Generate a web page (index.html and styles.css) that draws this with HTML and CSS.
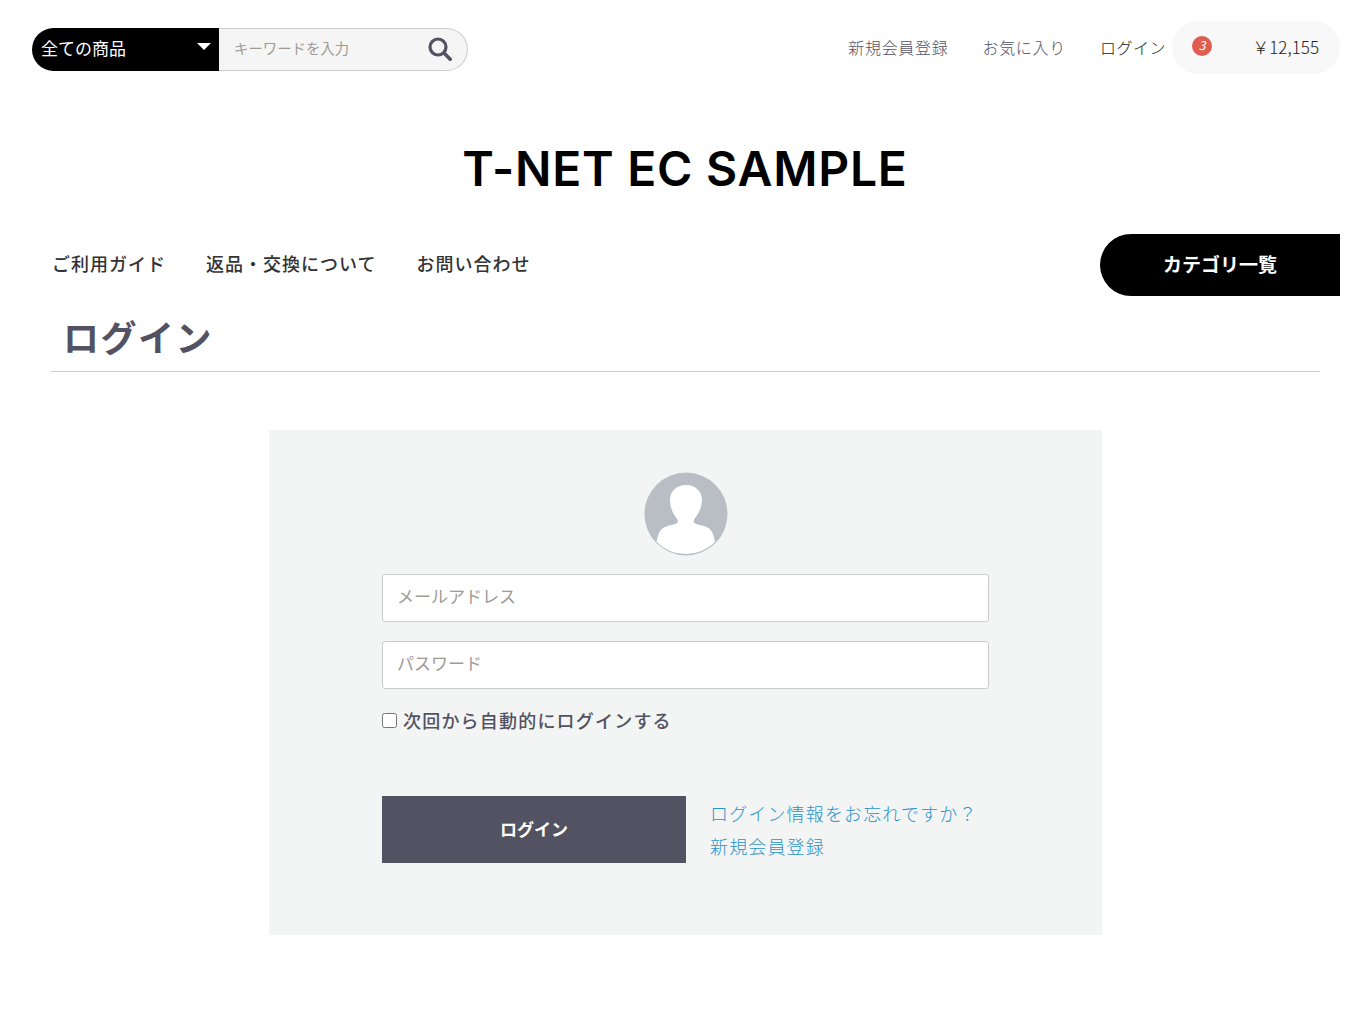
FILE: index.html
```html
<!DOCTYPE html>
<html lang="ja">
<head>
    <meta charset="UTF-8">
    <meta name="viewport" content="width=device-width, initial-scale=1.0">
    <title>ログイン - T-NET EC SAMPLE</title>
    <link rel="stylesheet" href="styles.css">
</head>
<body>
    <header class="header">
        <div class="header-top">
            <form class="search">
                <div class="search-category">
                    <span>全ての商品</span>
                    <span class="search-arrow"></span>
                </div>
                <div class="search-box">
                    <input type="text" class="search-input" placeholder="キーワードを入力">
                    <svg class="search-icon" viewBox="0 0 24 24" width="24" height="24">
                        <circle cx="10" cy="10" r="8" fill="none" stroke="#525263" stroke-width="3.2"/>
                        <path d="M16 16l6.2 6.2" fill="none" stroke="#525263" stroke-width="3.6" stroke-linecap="round"/>
                    </svg>
                </div>
            </form>
            <nav class="member-nav">
                <a href="#" class="member-link">新規会員登録</a>
                <a href="#" class="member-link">お気に入り</a>
                <a href="#" class="member-link member-link-login">ログイン</a>
            </nav>
            <div class="cart">
                <span class="cart-badge">3</span>
                <span class="cart-price">￥12,155</span>
            </div>
        </div>
        <h1 class="logo">T-NET EC SAMPLE</h1>
        <div class="header-nav">
            <ul class="guide-nav">
                <li><a href="#">ご利用ガイド</a></li>
                <li><a href="#">返品・交換について</a></li>
                <li><a href="#">お問い合わせ</a></li>
            </ul>
            <a href="#" class="category-btn">カテゴリ一覧</a>
        </div>
    </header>

    <main class="main">
        <div class="page-heading">
            <h2>ログイン</h2>
        </div>
        <div class="login-box">
            <svg class="avatar" viewBox="0 0 84 84" width="84" height="84">
                <circle cx="42" cy="42" r="41.5" fill="#b8bec4"/>
                <path d="M42 13c-9 0-16 6-16 15 0 7 2.500 13 6.500 18 1.500 2 2 4 0 5.500-3 1.500-8 1.500-12.500 4-4 2-6 6-7.500 14.500A41.500 41.500 0 0 0 71 70c-1.500-8.500-3.500-12.500-7.500-14.500-4.500-2.500-9.500-2.500-12.500-4-2-1.500-1.500-3.500 0-5.500 4-5 7-11 7-18 0-9-7-15-16-15z" fill="#fff"/>
            </svg>
            <form class="login-form">
                <input type="email" class="form-input" placeholder="メールアドレス">
                <input type="password" class="form-input" placeholder="パスワード">
                <label class="remember">
                    <input type="checkbox">
                    <span>次回から自動的にログインする</span>
                </label>
                <div class="login-actions">
                    <button type="button" class="login-btn">ログイン</button>
                    <div class="login-links">
                        <a href="#">ログイン情報をお忘れですか？</a>
                        <a href="#">新規会員登録</a>
                    </div>
                </div>
            </form>
        </div>
    </main>
</body>
</html>
```

FILE: styles.css
```css
* {
    margin: 0;
    padding: 0;
    box-sizing: border-box;
}

body {
    background: #fff;
    color: #525263;
    font-family: "Noto Sans CJK JP", "Noto Sans", sans-serif;
    min-height: 1027px;
}

a {
    color: inherit;
    text-decoration: none;
}

ul {
    list-style: none;
}

.header {
    padding: 21px 29px 0 32px;
}

.header-top {
    display: flex;
    align-items: flex-start;
    height: 53px;
}

.search {
    display: flex;
    width: 436px;
    height: 43px;
    margin-top: 7px;
}

.search-category {
    width: 187px;
    display: flex;
    align-items: center;
    justify-content: space-between;
    padding: 0 8px 4px 9px;
    background: #000;
    color: #fff;
    font-size: 17px;
    border-radius: 22px 0 0 22px;
}

.search-arrow {
    width: 0;
    height: 0;
    margin: 0 0 2px;
    border-left: 7px solid transparent;
    border-right: 7px solid transparent;
    border-top: 7px solid #fff;
}

.search-box {
    flex: 1;
    display: flex;
    align-items: center;
    padding: 0 15px;
    background: #f5f5f5;
    border: 1px solid #ccc;
    border-left: none;
    border-radius: 0 22px 22px 0;
}

.search-input {
    flex: 1;
    min-width: 0;
    margin-top: -4px;
    background: none;
    border: none;
    outline: none;
    font-family: inherit;
    font-size: 14.400px;
}

.search-input::placeholder {
    color: #a09b95;
    opacity: 1;
}

.search-icon {
    flex: none;
    margin-top: -1px;
}

.member-nav {
    display: flex;
    align-items: center;
    margin-left: auto;
    height: 51px;
}

.member-link {
    font-size: 16px;
    font-weight: 300;
    color: #525263;
    letter-spacing: 0.7px;
    margin-left: 34px;
}

.member-link-login {
    color: #222;
    letter-spacing: 0.5px;
}

.cart {
    position: relative;
    display: flex;
    align-items: center;
    justify-content: flex-end;
    width: 168px;
    height: 53px;
    margin-left: 6px;
    padding: 0 21px 2px 0;
    background: #f8f8f8;
    border-radius: 27px;
}

.cart-badge {
    position: absolute;
    left: 20px;
    top: 15px;
    width: 20px;
    height: 20px;
    border-radius: 50%;
    background: #de5d50;
    color: #fff;
    font-size: 12px;
    font-style: italic;
    line-height: 18px;
    text-align: center;
}

.cart-price {
    font-size: 17px;
    font-weight: 300;
    color: #222;
}

.logo {
    margin: 47px 0 0;
    padding-right: 2px;
    text-align: center;
    font-family: "Inter", "Noto Sans", sans-serif;
    font-size: 48px;
    font-weight: 600;
    letter-spacing: 0.75px;
    line-height: 96px;
    height: 96px;
    color: #000;
}

.header-nav {
    display: flex;
    align-items: center;
    justify-content: space-between;
    margin-top: 17px;
    height: 62px;
}

.guide-nav {
    display: flex;
    gap: 40px;
    padding: 0 0 5px 20px;
}

.guide-nav a {
    font-size: 18px;
    font-weight: 500;
    color: #333;
    letter-spacing: 1px;
}

.category-btn {
    width: 240px;
    height: 62px;
    display: flex;
    align-items: center;
    justify-content: center;
    padding-bottom: 4px;
    background: #000;
    color: #fff;
    font-size: 19px;
    font-weight: 700;
    border-radius: 31px 0 0 31px;
}

.main {
    padding: 0 49px 0 51px;
}

.page-heading {
    height: 76px;
    padding: 14px 0 0 12px;
    border-bottom: 1px solid #ccc;
}

.page-heading h2 {
    font-size: 36px;
    font-weight: 700;
    line-height: 52px;
    letter-spacing: 1.500px;
}

.login-box {
    width: 833px;
    height: 505px;
    margin: 58px auto 0;
    padding: 42px 113px 0;
    background: #f3f5f4;
    display: flex;
    flex-direction: column;
    align-items: center;
}

.avatar {
    flex: none;
}

.login-form {
    width: 607px;
    margin-top: 18px;
}

.form-input {
    display: block;
    width: 100%;
    height: 48px;
    margin-bottom: 19px;
    padding: 0 14px 6px;
    background: #fff;
    border: 1px solid #ccc;
    border-radius: 3px;
    outline: none;
    font-family: inherit;
    font-size: 17px;
}

.form-input::placeholder {
    color: #a09b95;
    opacity: 1;
}

.remember {
    display: flex;
    align-items: center;
    gap: 6px;
    margin-top: -1px;
    height: 28px;
    font-size: 18px;
    font-weight: 500;
    letter-spacing: 1.200px;
}

.remember input {
    width: 15px;
    height: 15px;
    margin: 0;
    margin-bottom: 1px;
}

.remember span {
    margin-top: -2px;
}

.login-actions {
    display: flex;
    align-items: center;
    margin-top: 61px;
}

.login-btn {
    width: 304px;
    height: 67px;
    padding-bottom: 3px;
    background: #525263;
    color: #fff;
    border: none;
    font-family: inherit;
    font-size: 17px;
    font-weight: 700;
    margin-right: 24px;
}

.login-links {
    display: flex;
    flex-direction: column;
    gap: 9px;
    color: #2b93c8;
    font-size: 18px;
    font-weight: 300;
    line-height: 24px;
}

.login-links a {
    letter-spacing: 1.150px;
}
```
